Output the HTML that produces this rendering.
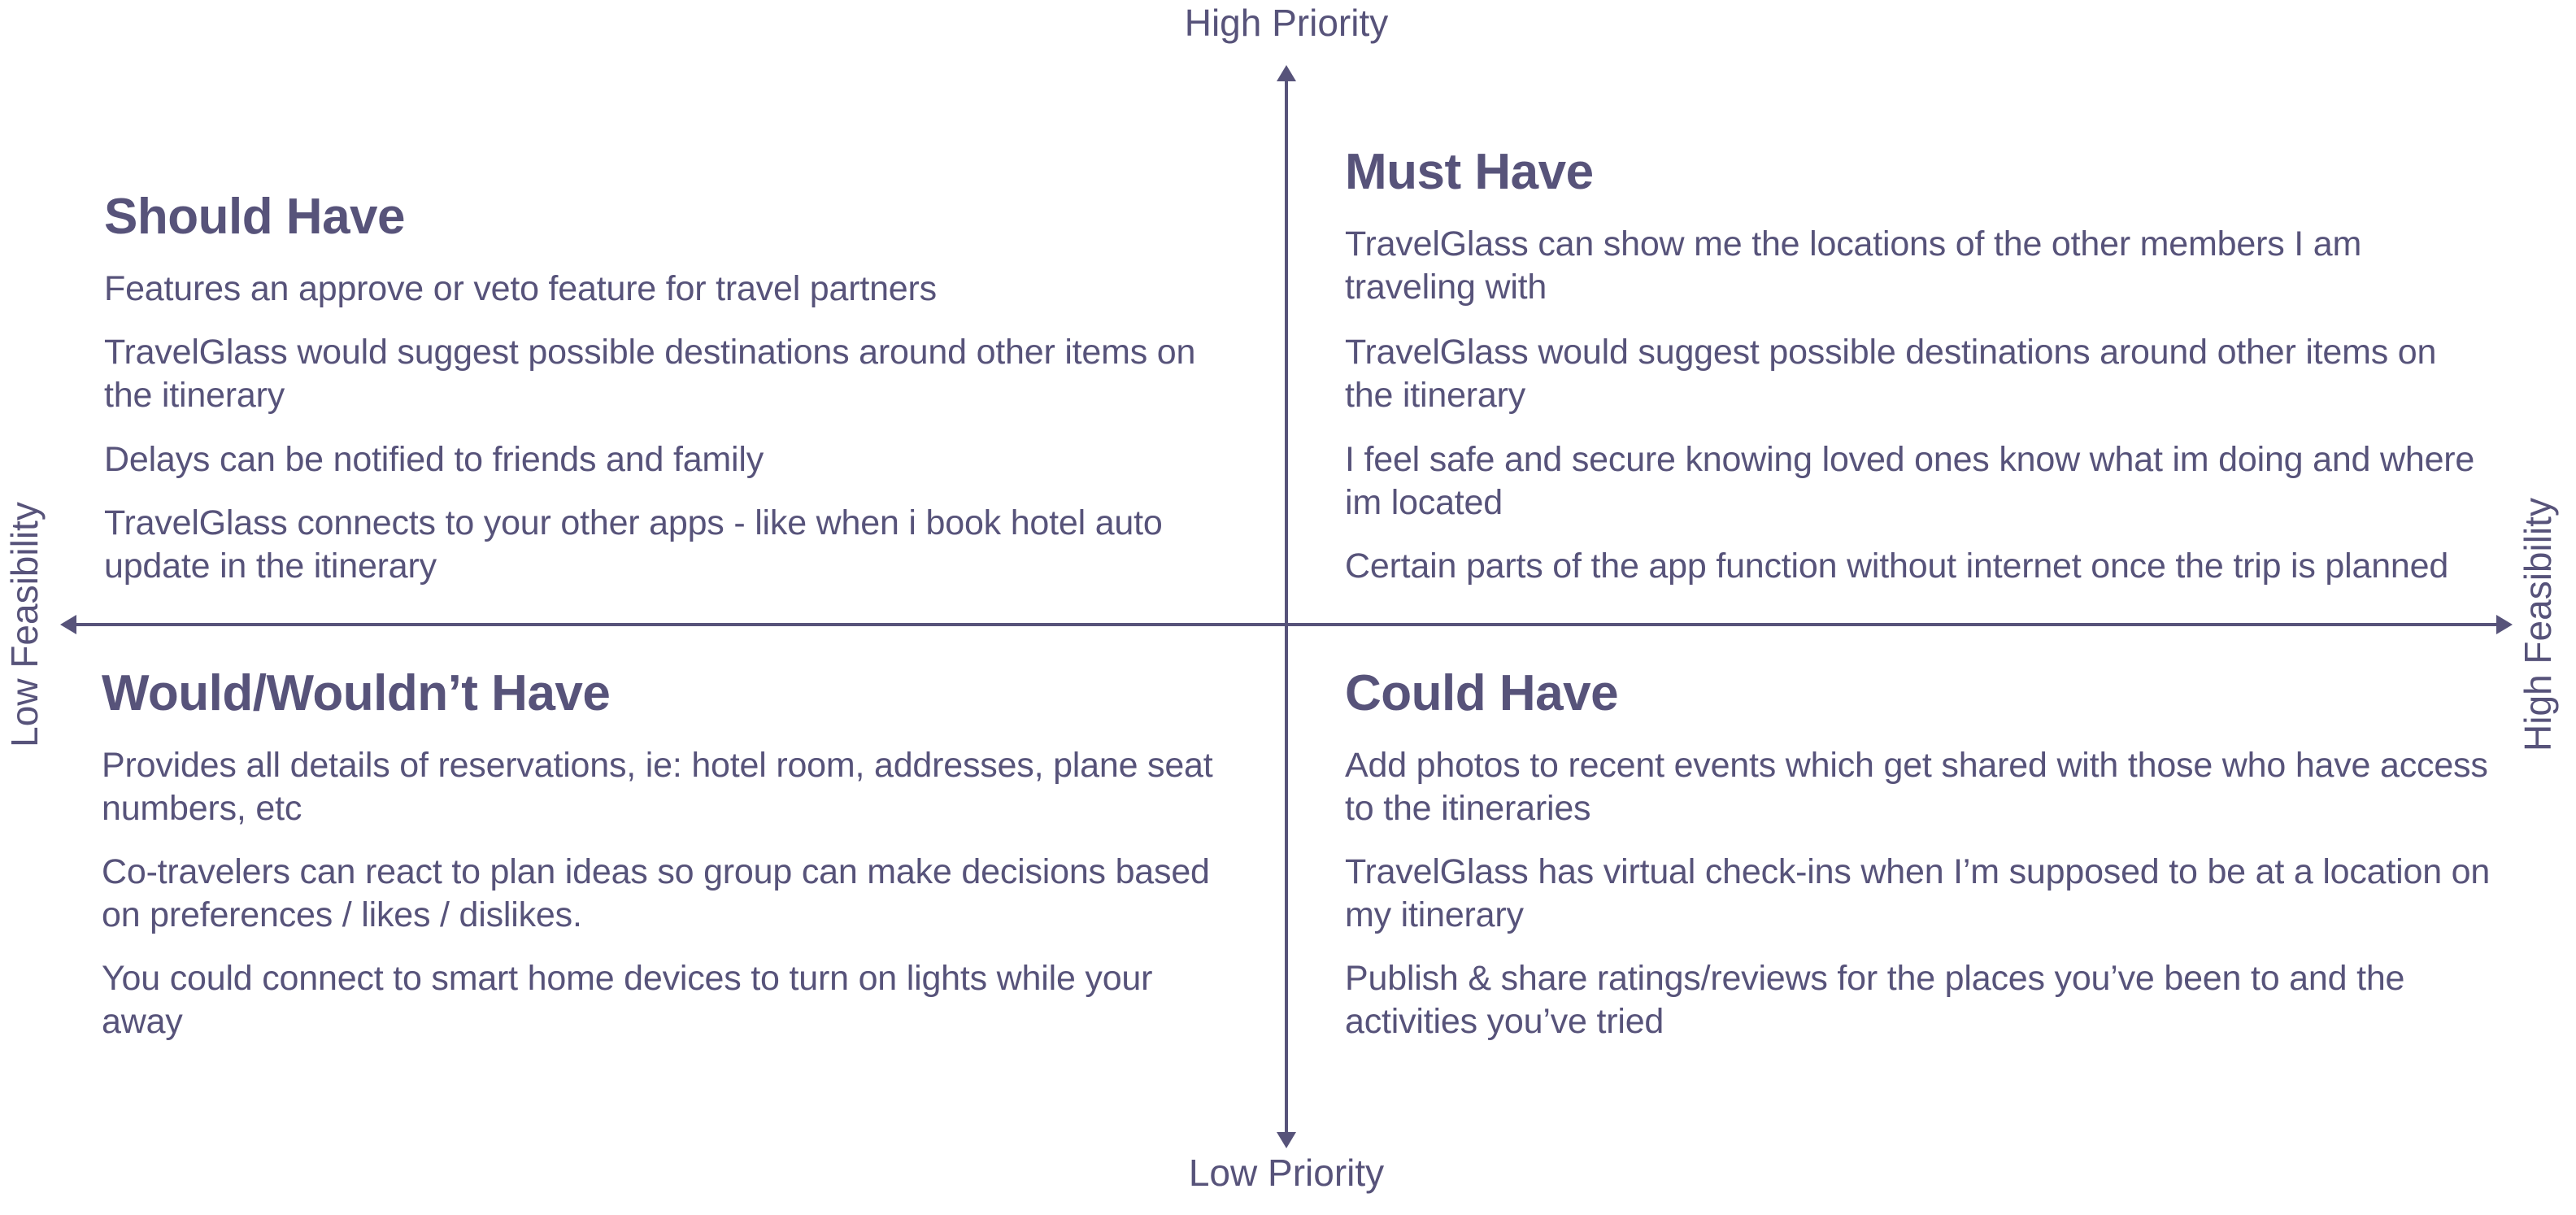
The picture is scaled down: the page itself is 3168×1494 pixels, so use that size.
<!DOCTYPE html>
<html><head><meta charset="utf-8"><style>
html,body{margin:0;padding:0;background:#fff;}
body{width:3168px;height:1494px;position:relative;overflow:hidden;font-family:"Liberation Sans",sans-serif;color:#57537a;}
.h{position:absolute;font-size:62px;font-weight:bold;letter-spacing:-0.5px;white-space:nowrap;line-height:64px;}
.p{position:absolute;font-size:43px;line-height:53px;white-space:nowrap;letter-spacing:-0.2px;}
.ax{position:absolute;font-size:46px;white-space:nowrap;line-height:54px;}
</style></head><body>
<svg width="3168" height="1494" style="position:absolute;left:0;top:0">
<g fill="#57537a" stroke="#57537a">
<line x1="1582" y1="96" x2="1582" y2="1396" stroke-width="4"/>
<line x1="92" y1="768" x2="3072" y2="768" stroke-width="4"/>
<polygon points="1582,80 1570,100 1594,100" stroke="none"/>
<polygon points="1582,1412 1570,1392 1594,1392" stroke="none"/>
<polygon points="74,768 94,756 94,780" stroke="none"/>
<polygon points="3090,768 3070,756 3070,780" stroke="none"/>
</g></svg>
<div class="ax" style="left:1582px;top:1px;transform:translateX(-50%)">High Priority</div>
<div class="ax" style="left:1582px;top:1415px;transform:translateX(-50%)">Low Priority</div>
<div class="ax" style="left:30px;top:768px;transform:translate(-50%,-50%) rotate(-90deg)">Low Feasibility</div>
<div class="ax" style="left:3121px;top:768px;transform:translate(-50%,-50%) rotate(-90deg)">High Feasibility</div>

<div class="h" style="left:128px;top:235px">Should Have</div>
<div class="p" style="left:128px;top:329px">Features an approve or veto feature for travel partners</div>
<div class="p" style="left:128px;top:407px">TravelGlass would suggest possible destinations around other items on<br>the itinerary</div>
<div class="p" style="left:128px;top:539px">Delays can be notified to friends and family</div>
<div class="p" style="left:128px;top:617px">TravelGlass connects to your other apps - like when i book hotel auto<br>update in the itinerary</div>

<div class="h" style="left:1654px;top:180px">Must Have</div>
<div class="p" style="left:1654px;top:274px">TravelGlass can show me the locations of the other members I am<br>traveling with</div>
<div class="p" style="left:1654px;top:407px">TravelGlass would suggest possible destinations around other items on<br>the itinerary</div>
<div class="p" style="left:1654px;top:539px">I feel safe and secure knowing loved ones know what im doing and where<br>im located</div>
<div class="p" style="left:1654px;top:670px">Certain parts of the app function without internet once the trip is planned</div>

<div class="h" style="left:125px;top:821px">Would/Wouldn’t Have</div>
<div class="p" style="left:125px;top:915px">Provides all details of reservations, ie: hotel room, addresses, plane seat<br>numbers, etc</div>
<div class="p" style="left:125px;top:1046px">Co-travelers can react to plan ideas so group can make decisions based<br>on preferences / likes / dislikes.</div>
<div class="p" style="left:125px;top:1177px">You could connect to smart home devices to turn on lights while your<br>away</div>

<div class="h" style="left:1654px;top:821px">Could Have</div>
<div class="p" style="left:1654px;top:915px">Add photos to recent events which get shared with those who have access<br>to the itineraries</div>
<div class="p" style="left:1654px;top:1046px">TravelGlass has virtual check-ins when I’m supposed to be at a location on<br>my itinerary</div>
<div class="p" style="left:1654px;top:1177px">Publish &amp; share ratings/reviews for the places you’ve been to and the<br>activities you’ve tried</div>
</body></html>
